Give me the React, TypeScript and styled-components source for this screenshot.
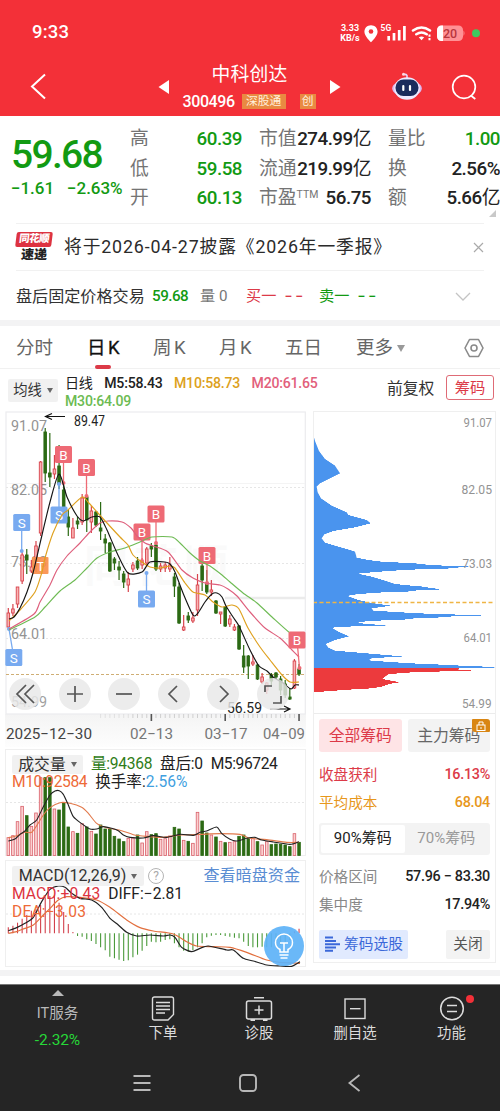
import React from 'react';
import styled, { createGlobalStyle } from 'styled-components';

const Global = createGlobalStyle`
  * { box-sizing: border-box; }
  body { margin: 0; background: #fff; }
  button { border: 0; padding: 0; margin: 0; font: inherit; background: none; }
  svg { display: block; }
`;

const GREEN = '#129a12';
const RED = '#dc3a48';
const FONT = 'Roboto, "Noto Sans CJK SC", sans-serif';

const Page = styled.main`
  width: 500px;
  height: 1111px;
  display: flex;
  flex-direction: column;
  background: #fff;
  color: #222;
  font-family: ${FONT};
  line-height: 1;
  white-space: nowrap;
  overflow: hidden;
`;

/* ---------- header ---------- */
const Header = styled.header`
  height: 116px;
  flex: none;
  background: #f33038;
  color: #fff;
`;
const StatusBar = styled.div`
  height: 58px;
  padding: 7px 20px 0 32px;
  display: flex;
  align-items: center;
  justify-content: space-between;
`;
const Clock = styled.span`
  font-size: 18.5px;
  font-weight: 500;
  letter-spacing: 0.2px;
`;
const StatusIcons = styled.div`
  display: flex;
  align-items: center;
`;
const Speed = styled.div`
  width: 24px;
  font-size: 9px;
  font-weight: 700;
  line-height: 10px;
  text-align: center;
  margin-right: 0;
`;
const TitleBar = styled.div`
  height: 58px;
  display: grid;
  grid-template-columns: 158px 11px 161px 11px 51px 30px 29px 28px;
  align-items: center;
`;
const TitleBlock = styled.div`
  height: 58px;
  display: flex;
  flex-direction: column;
  align-items: center;
`;
const StockName = styled.h1`
  margin: 7px 0 0;
  font-size: 18.8px;
  line-height: 20px;
  font-weight: 400;
  letter-spacing: 0.2px;
`;
const CodeRow = styled.div`
  display: flex;
  align-items: center;
  width: 134px;
  margin-top: 9px;
  height: 15px;
  font-size: 16px;
  font-weight: 500;
  letter-spacing: -0.4px;
`;
const Pill = styled.span<{ $w: number; $ml: number }>`
  width: ${p => p.$w}px;
  margin-left: ${p => p.$ml}px;
  height: 15px;
  background: #e98a42;
  color: #fff0dc;
  font-size: 11.8px;
  font-weight: 400;
  line-height: 14px;
  letter-spacing: 0;
  text-align: center;
`;

/* ---------- quote ---------- */
const Quote = styled.section`
  height: 107px;
  flex: none;
  display: grid;
  grid-template-columns: 102px 112px 112px 112px;
  column-gap: 17px;
  padding: 9px 0 0 11px;
  position: relative;
`;
const PriceBlock = styled.div`
  color: ${GREEN};
  font-weight: 500;
`;
const Price = styled.div`
  margin-top: 11px;
  font-size: 39px;
  line-height: 38px;
  letter-spacing: -1.7px;
`;
const Change = styled.div`
  display: flex;
  margin-top: 6px;
  font-size: 17px;
  gap: 13px;
  letter-spacing: -0.05px;
`;
const QuoteCol = styled.div`
  display: flex;
  flex-direction: column;
`;
const QuoteRow = styled.div`
  height: 29.5px;
  display: flex;
  align-items: center;
  justify-content: space-between;
`;
const QLabel = styled.span`
  color: #747474;
  font-size: 18.8px;
  sup { font-size: 10.5px; position: relative; top: 1px; line-height: 0; }
`;
const QValue = styled.span<{ $green?: boolean }>`
  color: ${p => (p.$green ? GREEN : '#222')};
  font-size: 18.8px;
  font-weight: 500;
  letter-spacing: -0.5px;
`;
const Unit = styled.span`
  font-weight: 400;
`;
const Corner = styled.i`
  position: absolute;
  right: 4px;
  top: 94px;
  border-left: 7px solid transparent;
  border-bottom: 7px solid #c9c9c9;
`;

/* ---------- news and after-hours ---------- */
const News = styled.section`
  height: 48px;
  flex: none;
  margin: 0 16px;
  border-top: 1px solid #f1f1f1;
  border-bottom: 1px solid #f1f1f1;
  display: flex;
  align-items: center;
`;
const Brand = styled.div`
  width: 36px;
  margin-right: 12px;
  text-align: center;
  font-weight: 900;
`;
const BrandTop = styled.div`
  height: 15px;
  background: #dd3341;
  border-radius: 2px;
  transform: skewX(-7deg);
  color: #fff;
  font-size: 10.5px;
  line-height: 14px;
  letter-spacing: -0.6px;
`;
const BrandBottom = styled.div`
  font-size: 13px;
  line-height: 15px;
  transform: skewX(-4deg);
  color: #222;
`;
const NewsText = styled.div`
  font-size: 17.8px;
  letter-spacing: 0.85px;
  flex: 1;
  color: #2b2b2b;
`;
const AfterHours = styled.section`
  height: 49px;
  flex: none;
  display: grid;
  align-items: center;
  padding: 3px 0 0 16px;
  grid-template-columns: 136px 48px 46px 73px 136px 20px;
  font-size: 15.2px;
`;
const AfterTitle = styled.span`
  font-size: 16.1px;
  color: #333;
`;
const Tint = styled.span<{ $c: string; $w?: number; $ls?: number }>`
  color: ${p => p.$c};
  font-weight: ${p => p.$w ?? 400};
  letter-spacing: ${p => p.$ls ?? 0}px;
`;
const Dash = styled.span`
  margin-left: 8px;
  letter-spacing: 3px;
  font-size: 14px;
  font-weight: 500;
`;
const Band = styled.div`
  height: 6px;
  flex: none;
  background: #f3f3f4;
`;

/* ---------- tabs ---------- */
const Tabs = styled.nav`
  height: 43px;
  flex: none;
  padding-left: 16px;
  display: grid;
  grid-template-columns: 71px 66px 66px 66px 71px 108px 40px;
  border-bottom: 1px solid #f1f1f1;
`;
const Tab = styled.button<{ $on?: boolean }>`
  display: flex;
  align-items: center;
  gap: 4px;
  height: 44px;
  font-size: 18.5px;
  word-spacing: -2px;
  color: ${p => (p.$on ? '#111' : '#666')};
  -webkit-text-stroke: ${p => (p.$on ? '0.3px #111' : '0')};
  position: relative;
  &::after {
    content: '';
    display: ${p => (p.$on ? 'block' : 'none')};
    position: absolute;
    left: 8px;
    bottom: 1px;
    width: 16px;
    height: 4px;
    border-radius: 2px;
    background: #dc3a48;
  }
`;
const Caret = styled.i<{ $c?: string; $s?: number }>`
  border: ${p => p.$s ?? 4}px solid transparent;
  border-top: ${p => (p.$s ?? 4) * 1.5}px solid ${p => p.$c ?? '#666'};
  border-bottom: 0;
`;

const MaRow = styled.section`
  height: 42px;
  flex: none;
  display: flex;
  padding: 0 6px 0 8px;
`;
const Picker = styled.button<{ $w: number; $h: number; $size: number }>`
  width: ${p => p.$w}px;
  height: ${p => p.$h}px;
  flex: none;
  display: flex;
  align-items: center;
  justify-content: center;
  gap: 5px;
  background: rgba(238, 238, 238, 0.85);
  border-radius: 2px;
  font-size: ${p => p.$size}px;
  color: #333;
`;
const MaPicker = styled(Picker)`
  margin-top: 10px;
`;
const MaValues = styled.div`
  width: 322px;
  margin-left: 7px;
  padding-top: 5px;
  font-size: 14.1px;
  line-height: 18px;
  font-weight: 500;
  letter-spacing: -0.22px;
`;
const MaItem = styled.span<{ $c: string; $thin?: boolean }>`
  color: ${p => p.$c};
  font-weight: ${p => (p.$thin ? 400 : 500)};
  margin-right: 11.500px;
`;
const Adjust = styled.span`
  font-size: 15.8px;
  line-height: 40px;
  color: #333;
`;
const ChipButton = styled.button`
  width: 48px;
  height: 25px;
  margin: 6px 0 0 auto;
  border: 1px solid #df6b76;
  border-radius: 3px;
  color: ${RED};
  font-size: 15.3px;
  line-height: 22px;
`;

/* ---------- charts ---------- */
const Main = styled.section`
  height: 556px;
  flex: none;
  display: flex;
  padding-left: 5px;
  gap: 7px;
`;
const LeftCol = styled.div`
  width: 301px;
  display: flex;
  flex-direction: column;
`;
const KWrap = styled.div`
  height: 338px;
  position: relative;
`;
const Controls = styled.div`
  position: absolute;
  left: 4px;
  top: 267px;
  display: flex;
  gap: 17.6px;
`;
const RoundButton = styled.button`
  width: 32px;
  height: 32px;
  border-radius: 50%;
  background: rgba(232, 232, 232, 0.82);
  display: grid;
  place-items: center;
`;
const SubChart = styled.div<{ $h: number; $mt: number }>`
  height: ${p => p.$h}px;
  margin-top: ${p => p.$mt}px;
  border: 1px solid #efefef;
  position: relative;
`;
const Plot = styled.svg`
  position: absolute;
  left: -1px;
  top: -1px;
`;
const Legend = styled.div`
  position: relative;
  padding: 5px 0 0 6px;
  font-size: 15.6px;
  color: #222;
`;
const LegendLine = styled.div<{ $h: number }>`
  height: ${p => p.$h}px;
  display: flex;
  align-items: center;
  gap: 8px;
`;
const Help = styled.span`
  width: 16px;
  height: 16px;
  border: 1px solid #b5b5b5;
  border-radius: 50%;
  color: #aaa;
  font-size: 12px;
  line-height: 14px;
  text-align: center;
  margin-left: -4px;
`;
const DarkLink = styled.a`
  margin-left: auto;
  margin-right: 5px;
  color: #5a8dd3;
  font-size: 16.1px;
`;
const Bulb = styled.button`
  position: absolute;
  left: 258px;
  top: 65px;
  width: 40px;
  height: 40px;
  border-radius: 50%;
  background: rgba(93, 178, 247, 0.92);
  display: grid;
  place-items: center;
`;

/* ---------- chip panel ---------- */
const ChipCol = styled.div`
  width: 183px;
  height: 552px;
  border: 1px solid #efefef;
`;
const ChipPanel = styled.div`
  height: 248px;
  border-top: 1px solid #ececec;
  padding: 5px 5px 0 5px;
  display: flex;
  flex-direction: column;
`;
const SplitRow = styled.div<{ $mt?: number }>`
  display: flex;
  justify-content: space-between;
  margin-top: ${p => p.$mt ?? 0}px;
`;
const ScopeButton = styled.button<{ $on?: boolean }>`
  width: 82.5px;
  height: 33px;
  margin-bottom: 9px;
  border-radius: 3px;
  position: relative;
  font-size: 15.8px;
  color: ${p => (p.$on ? RED : '#666')};
  background: ${p => (p.$on ? '#fee4e6' : '#f3f3f3')};
`;
const Lock = styled.span`
  position: absolute;
  right: 0;
  top: 0;
  width: 18px;
  height: 13px;
  background: #d98613;
  border-radius: 1px 3px 1px 3px;
  display: grid;
  place-items: center;
`;
const Stat = styled.div<{ $c: string; $v: string }>`
  height: 28.4px;
  display: flex;
  align-items: center;
  justify-content: space-between;
  font-size: 14.6px;
  color: ${p => p.$c};
  b { font-weight: 500; color: ${p => p.$v}; font-size: 14.4px; letter-spacing: -0.3px; }
`;
const Toggle = styled.div`
  height: 32px;
  margin: 5px 0 8px;
  padding: 2px;
  background: #f3f3f3;
  border-radius: 3px;
  display: flex;
`;
const ToggleItem = styled.button<{ $on?: boolean }>`
  flex: 1;
  border-radius: 2px;
  font-size: 15px;
  letter-spacing: 0;
  color: ${p => (p.$on ? '#222' : '#999')};
  background: ${p => (p.$on ? '#fff' : 'transparent')};
`;
const FootButton = styled.button<{ $w: number; $c: string; $bg: string }>`
  width: ${p => p.$w}px;
  height: 29px;
  border-radius: 2px;
  display: flex;
  align-items: center;
  justify-content: center;
  gap: 4px;
  font-size: 14.7px;
  color: ${p => p.$c};
  background: ${p => p.$bg};
`;

/* ---------- bottom ---------- */
const Divider = styled(Band)`
  margin: 3px 0 8px;
`;
const Bottom = styled.footer`
  height: 127px;
  flex: none;
  background: #252525;
  border-top: 1px solid #777;
  color: #dcdcdc;
`;
const Actions = styled.div`
  height: 70px;
  display: grid;
  grid-template-columns: 115px 96px 96px 96px 97px;
`;
const Action = styled.button`
  display: flex;
  flex-direction: column;
  align-items: center;
  padding-top: 11px;
  color: #dcdcdc;
  font-size: 14.4px;
  line-height: 18px;
  position: relative;
  gap: 4px;
`;
const IndexBox = styled.div`
  display: flex;
  flex-direction: column;
  align-items: center;
  padding-top: 5px;
  font-size: 14.6px;
  line-height: 18px;
  color: #b9b9b9;
`;
const Up = styled.i`
  border: 6px solid transparent;
  border-bottom-color: #b9b9b9;
  border-top: 0;
  margin-bottom: 8px;
`;
const IndexChange = styled.span`
  margin-top: 9px;
  color: #27d838;
  font-size: 15.500px;
  letter-spacing: -0.1px;
`;
const Dot = styled.i`
  position: absolute;
  left: 63px;
  top: 10px;
  width: 8px;
  height: 8px;
  border-radius: 50%;
  background: #f33038;
`;
const SysNav = styled.div`
  height: 56px;
  display: grid;
  grid-template-columns: 133px 106px 109px 20px;
  align-items: center;
`;

/* ---------- data ---------- */
// [isUp, high, bodyTop, bodyBottom, low]
type Candle = [number, number, number, number, number];
const candles: Candle[] = [
  [1, 608, 613, 627, 630], [1, 604, 609, 613, 616], [1, 587, 587, 604, 608], [1, 550, 555, 581, 584],
  [0, 549, 555, 560, 574], [1, 560, 567, 571, 573], [1, 541, 546, 560, 572], [1, 461, 462, 533, 536],
  [0, 428, 432, 473, 482], [0, 433, 473, 477, 487], [1, 455, 469, 474, 479], [0, 445, 466, 484, 489],
  [0, 485, 490, 519, 521], [0, 510, 517, 527, 536], [1, 518, 528, 538, 538], [0, 517, 521, 524, 529],
  [1, 494, 498, 522, 525], [0, 496, 497, 520, 532], [1, 506, 511, 522, 533], [0, 511, 512, 525, 527],
  [0, 502, 528, 531, 540], [0, 534, 539, 543, 553], [0, 542, 543, 571, 572], [0, 557, 559, 563, 570],
  [0, 561, 567, 570, 580], [0, 571, 574, 582, 588], [1, 572, 579, 585, 592], [1, 562, 565, 569, 572],
  [0, 557, 561, 568, 570], [1, 558, 562, 565, 569], [1, 547, 549, 563, 566], [0, 543, 546, 549, 557],
  [0, 542, 545, 569, 571], [1, 563, 566, 569, 572], [1, 562, 565, 568, 572], [1, 557, 565, 569, 572],
  [0, 573, 577, 586, 597], [0, 583, 587, 623, 624], [1, 615, 627, 630, 631], [0, 612, 616, 620, 623],
  [1, 612, 618, 621, 623], [1, 574, 585, 610, 616], [0, 560, 566, 580, 591], [0, 570, 583, 592, 594],
  [1, 580, 590, 592, 596], [0, 600, 601, 613, 614], [1, 612, 612, 614, 624], [0, 606, 607, 626, 627],
  [1, 615, 619, 624, 627], [1, 624, 627, 630, 631], [0, 625, 626, 649, 650], [0, 645, 656, 667, 673],
  [0, 655, 656, 666, 679], [1, 655, 662, 664, 666], [0, 664, 665, 679, 680], [1, 673, 677, 682, 684],
  [1, 682, 683, 690, 694], [0, 673, 675, 681, 685], [0, 672, 673, 677, 679], [0, 676, 679, 690, 695],
  [0, 680, 684, 695, 698], [0, 688, 697, 699, 700], [1, 659, 661, 688, 689], [0, 664, 669, 674, 676],
];
const px = (i: number) => 8.3 + i * 4.615;

const volumes = [
  278, 272, 230, 184, 212, 244, 204, 98, 98, 98, 192, 195, 173, 246, 260, 265, 236, 246, 259, 267, 240, 252,
  253, 274, 282, 290, 280, 279, 270, 294, 260, 269, 266, 283, 281, 273, 247, 252, 286, 289, 295, 202, 228,
  264, 270, 276, 289, 293, 292, 290, 274, 270, 281, 280, 290, 300, 290, 299, 297, 298, 300, 305, 266, 292,
];
const macd = [
  202, 197, 188, 176, 165, 152, 148, 135, 112, 108, 105, 128, 156, 192, 216, 228, 230, 238, 243, 252, 262, 271,
  290, 295, 299, 303, 301, 292, 284, 272, 258, 245, 247, 245, 240, 238, 250, 262, 272, 275, 270, 262, 250,
  232, 227, 225, 225, 228, 230, 233, 235, 245, 258, 262, 262, 260, 262, 262, 258, 255, 250, 240, 214, 206,
];

type Pt = [number, number];
const smooth = (p: Pt[]) => {
  let d = `M${p[0][0]} ${p[0][1]}`;
  for (let i = 0; i < p.length - 1; i++) {
    const a = p[Math.max(0, i - 1)], b = p[i], c = p[i + 1], e = p[Math.min(p.length - 1, i + 2)];
    d += `C${b[0] + (c[0] - a[0]) / 8} ${b[1] + (c[1] - a[1]) / 8} ${c[0] - (e[0] - b[0]) / 8} ${c[1] - (e[1] - b[1]) / 8} ${c[0]} ${c[1]}`;
  }
  return d;
};
const third = (oy: number, p: Pt[]): Pt[] => p.map(([x, y]) => [x / 3, oy + y / 3]);

const m5: Pt[] = [[9, 619], [14, 617], [20, 608], [27, 592], [33, 573], [42, 535], [50, 502], [59, 474], [67, 497], [77, 516], [83, 521], [88, 519], [92, 517], [100, 517], [107, 530], [117, 553], [128, 573], [142, 572], [150, 562], [165, 562], [170, 564], [175, 572], [183, 593], [193, 615], [198, 613], [205, 602], [212, 594], [217, 593], [222, 597], [226, 606], [233, 617], [239, 626], [250, 650], [259, 666], [267, 671], [273, 677], [283, 683], [291, 689], [295, 685], [299, 685]];
const m10: Pt[] = [[9, 621], [20, 610], [35, 592], [42, 572], [45, 558], [53, 533], [62, 515], [68, 510], [82, 497], [88, 502], [97, 512], [107, 523], [120, 537], [128, 545], [133, 555], [142, 562], [150, 567], [160, 568], [170, 566], [175, 568], [185, 583], [193, 592], [205, 595], [213, 602], [222, 607], [232, 605], [239, 609], [248, 628], [260, 647], [270, 660], [282, 675], [290, 682], [299, 682]];
const m20: Pt[] = [[9, 629], [34, 614], [40, 602], [50, 585], [57, 570], [67, 556], [80, 543], [90, 532], [100, 523], [108, 521], [122, 522], [131, 528], [137, 536], [145, 543], [153, 546], [168, 552], [182, 570], [193, 578], [205, 583], [220, 585], [228, 589], [237, 596], [250, 612], [265, 628], [280, 638], [292, 650], [299, 657]];
const m30: Pt[] = [[9, 630], [35, 617], [45, 607], [60, 591], [75, 580], [87, 568], [97, 558], [110, 552], [125, 548], [140, 542], [152, 537], [172, 537], [180, 543], [190, 553], [200, 561], [210, 566], [222, 575], [230, 582], [243, 593], [257, 603], [273, 618], [290, 633], [297, 635]];

const volM5 = third(745, [[25, 288], [45, 282], [60, 268], [75, 258], [90, 240], [110, 225], [130, 185], [150, 150], [165, 138], [178, 137], [190, 148], [205, 180], [220, 215], [245, 236], [270, 252], [290, 252], [310, 245], [335, 250], [355, 257], [370, 270], [390, 277], [430, 279], [460, 272], [500, 277], [540, 268], [580, 271], [600, 262], [620, 258], [650, 246], [665, 265], [690, 283], [710, 288], [740, 280], [765, 277], [785, 285], [820, 291], [870, 298], [897, 290]]);
const volM10 = third(745, [[25, 278], [50, 272], [75, 262], [95, 262], [110, 242], [130, 210], [150, 188], [180, 173], [210, 175], [245, 187], [265, 205], [290, 235], [320, 248], [365, 257], [400, 269], [440, 274], [490, 277], [540, 270], [600, 268], [660, 266], [720, 268], [750, 280], [800, 284], [860, 292], [897, 292]]);
const diff = third(860, [[25, 212], [50, 203], [75, 190], [100, 172], [125, 125], [150, 88], [175, 78], [195, 82], [215, 100], [240, 115], [275, 120], [305, 142], [330, 175], [355, 195], [380, 217], [410, 228], [450, 225], [490, 228], [510, 225], [525, 232], [545, 262], [575, 275], [600, 265], [625, 258], [680, 270], [700, 270], [730, 295], [760, 303], [800, 315], [840, 318], [875, 319], [900, 305]]);
const dea = third(860, [[25, 220], [50, 215], [75, 205], [100, 195], [130, 165], [150, 145], [175, 120], [200, 110], [240, 112], [290, 120], [330, 142], [380, 180], [420, 203], [460, 213], [520, 222], [560, 245], [590, 258], [640, 260], [690, 262], [740, 277], [800, 300], [840, 307], [900, 310]]);

const chipBlue: Pt[] = [[24, 88], [30, 108], [42, 138], [60, 162], [90, 182], [105, 205], [85, 215], [45, 235], [35, 245], [38, 262], [48, 280], [80, 302], [125, 322], [130, 330], [185, 345], [197, 355], [150, 367], [85, 378], [58, 388], [50, 400], [60, 413], [100, 425], [135, 435], [150, 440], [155, 458], [190, 465], [230, 470], [330, 475], [375, 480], [490, 485], [430, 490], [330, 493], [250, 498], [200, 502], [158, 506], [200, 515], [240, 527], [270, 537], [350, 545], [402, 552], [310, 558], [200, 564], [135, 570], [130, 574], [160, 585], [200, 594], [258, 602], [200, 610], [205, 617], [340, 625], [528, 631], [400, 636], [300, 642], [220, 647], [155, 651], [180, 657], [258, 661], [120, 665], [80, 668], [100, 680], [132, 694], [90, 705], [62, 717], [70, 728], [90, 737], [150, 742], [220, 748], [290, 754], [200, 760], [190, 766], [280, 773], [400, 779], [568, 786], [470, 789], [24, 789]];
const chipRed: Pt[] = [[24, 789], [462, 789], [460, 795], [498, 797], [385, 800], [300, 803], [250, 808], [240, 815], [232, 822], [280, 831], [250, 838], [230, 845], [200, 850], [130, 854], [50, 860], [24, 862]];

// The distribution is drawn as one bar per pixel row, as wide as the outline at that height.
const chipBars = (p: Pt[]) => {
  const pts = p.map(([x, y]): Pt => [305 + x / 3, 405 + y / 3]).sort((a, b) => a[1] - b[1]);
  let d = '';
  for (let y = Math.ceil(pts[0][1]); y < pts[pts.length - 1][1]; y++) {
    const mid = y + 0.5;
    let k = pts.findIndex(q => q[1] > mid);
    if (k < 1) k = pts.length - 1;
    const [a, b] = [pts[k - 1], pts[k]];
    const t = b[1] === a[1] ? 0 : (mid - a[1]) / (b[1] - a[1]);
    let x = a[0] + (b[0] - a[0]) * Math.min(1, t);
    pts.forEach(q => { if (q[1] >= y && q[1] < y + 1 && q[0] > x && q[0] > 395) x = q[0]; });
    d += `M313 ${mid}H${x.toFixed(1)}`;
  }
  return d;
};

const AxisText = ({ x, y, w, size, children, fill = '#939393' }: { x: number; y: number; w: number; size: number; children: string; fill?: string }) => (
  <text x={x} y={y} fontSize={size} fill={fill} textLength={w} lengthAdjust="spacingAndGlyphs" fontFamily="Roboto">{children}</text>
);

const Flag = ({ x, y, kind, tx, ty }: { x: number; y: number; kind: 'B' | 'S'; tx: number; ty: number }) => {
  const c = kind === 'B' ? '#ee6a75' : '#78aaf0';
  return (
    <g>
      <line x1={x} y1={y} x2={tx} y2={ty} stroke={c} strokeWidth="1.3" />
      <circle cx={tx} cy={ty} r="2" fill={c} />
      <rect x={x - 8.5} y={y - 8.5} width="17" height="17" rx="1.5" fill={c} />
      <text x={x} y={y + 5} fontSize="13.5" fill="#fff" textAnchor="middle" fontFamily="Roboto">{kind}</text>
    </g>
  );
};

const KChart = () => (
  <svg width="301" height="338" viewBox="5 411 301 338">
    <defs>
      <linearGradient id="ruler" x1="0" x2="0" y1="0" y2="1">
        <stop offset="0" stopColor="#f4f4f4" />
        <stop offset="1" stopColor="#fdfdfd" />
      </linearGradient>
    </defs>
    <rect x="5" y="714" width="301" height="33" fill="url(#ruler)" />
    <rect x="6" y="412" width="299.3" height="302" fill="#fff" stroke="#ececee" strokeWidth="1.2" />
    <text x="84" y="582" fontSize="44" fontWeight="700" fill="#fafafa" textLength="144" fontFamily="Noto Sans CJK SC">同花顺</text>
    <path d="M225 598H305" stroke="#ebebeb" strokeWidth="2.4" />
    <path d="M6 483.500H305" stroke="#f4f4f4" />
    <path d="M6 487.500H305M6 563.500H305M6 638.500H305" stroke="#e6e6e6" strokeDasharray="2 2" />
    <path d="M6 674.5H305" stroke="#cfae74" strokeDasharray="3 2" />
    <AxisText x={11} y={431} w={36} size={15.5}>91.07</AxisText>
    <AxisText x={11} y={495} w={36} size={15.5}>82.05</AxisText>
    <AxisText x={11} y={567} w={36} size={15.5}>73.03</AxisText>
    <AxisText x={11} y={639} w={36} size={15.5}>64.01</AxisText>
    <AxisText x={11} y={707} w={36} size={15.5} fill="#a0a0a0">54.99</AxisText>
    {candles.map(([up, h, t, b, l], i) => {
      const c = up ? '#d8434c' : '#2c6a14';
      return (
        <g key={i}>
          <path d={`M${px(i)} ${h}V${t}M${px(i)} ${b}V${l}`} stroke={c} strokeWidth="1.2" />
          <rect x={px(i) - 1.3} y={t} width="2.6" height={b - t} fill={up ? '#f9b4b4' : c} stroke={c} strokeWidth="0.9" />
        </g>
      );
    })}
    <Flag kind="S" x={21.7} y={522.5} tx={21.7} ty={551} />
    <Flag kind="S" x={59} y={515} tx={59} ty={484} />
    <Flag kind="S" x={146.5} y={599} tx={146.5} ty={573} />
    <Flag kind="S" x={13.8} y={657.5} tx={9} ty={629} />
    <rect x="32" y="557" width="16.5" height="17" rx="1" fill="#f98d48" fillOpacity="0.9" />
    <text x="40.5" y="571" fontSize="13.5" fill="#fff" textAnchor="middle" fontFamily="Roboto">T</text>
    <Flag kind="B" x={63.5} y={454.5} tx={63.5} ty={483} />
    <Flag kind="B" x={86.5} y={467.5} tx={86.5} ty={496} />
    <Flag kind="B" x={142} y={532} tx={142} ty={561} />
    <Flag kind="B" x={156} y={514} tx={156} ty={543} />
    <Flag kind="B" x={207} y={555.5} tx={207} ty={583} />
    <g fill="none" strokeWidth="1.15">
      <path d={smooth(m30)} stroke="#6fbb55" />
      <path d={smooth(m20)} stroke="#de5f7c" />
      <path d={smooth(m10)} stroke="#dfa11f" />
      <path d={smooth(m5)} stroke="#151515" />
    </g>
    <Flag kind="B" x={297} y={640} tx={299.5} ty={668} />
    <g stroke="#111" strokeWidth="1.2" fill="none">
      <path d="M65 416.5H45.5M52 413.5L45.5 416.5L52 419.5" />
      <path d="M270 709H290M284 706L290 709L284 712" />
    </g>
    <AxisText x={74} y={425.5} w={31} size={13.8} fill="#222">89.47</AxisText>
    <AxisText x={227} y={712.5} w={35} size={14} fill="#222">56.59</AxisText>
    {Array.from({ length: 44 }, (_, i) => 63 - i).map(i => {
      const major = i === 63 || i === 47 || i === 31;
      return <path key={i} d={`M${px(i)} 714V${major ? 721 : 718}`} stroke={major ? '#555' : '#cfcfcf'} strokeWidth={major ? 1.6 : 1} opacity={i < 27 ? 0.5 : 1} />;
    })}
    <AxisText x={6} y={738.5} w={86} size={15} fill="#444">2025−12−30</AxisText>
    <AxisText x={130} y={738.5} w={43} size={15} fill="#777">02−13</AxisText>
    <AxisText x={204.5} y={738.5} w={43} size={15} fill="#777">03−17</AxisText>
    <AxisText x={263} y={738.5} w={42} size={15} fill="#777">04−09</AxisText>
  </svg>
);

const controlPaths = ['M15 2L6 11L15 20M23 2L14 11L23 20', 'M11 3V19M3 11H19', 'M3 11H19', 'M14 3L6 11L14 19', 'M8 3L16 11L8 19', 'M3 9V3H10M19 13V20H11'];

const App = () => (
  <Page>
    <Global />
    <Header>
      <StatusBar>
        <Clock>9:33</Clock>
        <StatusIcons>
          <Speed>3.33<br />KB/s</Speed>
          <svg width="118" height="20" viewBox="362 22 118 20">
            <path d="M371 24.300c-3.800 0-6.600 2.800-6.600 6.500 0 4.600 6.600 10.400 6.600 10.400s6.600-5.800 6.600-10.400c0-3.700-2.800-6.500-6.600-6.500z" fill="#fff" />
            <circle cx="371" cy="30.500" r="2.300" fill="#f33038" />
            <text x="380.500" y="30" fontSize="8.500" fontWeight="700" fill="#fff" fontFamily="Roboto">5G</text>
            <path d="M388.700 35V39.500M394 32V39.500M399.200 29V39.500M404.400 25V39.500" stroke="#fff" strokeWidth="2.700" />
            <path d="M413 29.500q8.500-6 17 0M416.300 33.300q5.200-3.600 10.400 0" fill="none" stroke="#fff" strokeWidth="2.500" strokeLinecap="round" />
            <path d="M418.800 36.300q2.700-1.800 5.400 0l-2.700 3z" fill="#fff" />
            <path d="M429.500 33.500v2.200M429.500 37v2.300" stroke="#fff" strokeWidth="2" />
            <rect x="437" y="24.500" width="26" height="15.500" rx="4.500" fill="#ff9195" />
            <path d="M463.500 29.500q2 2.700 0 5.500z" fill="#ff9195" />
            <path d="M441.500 24.500H443V40H441.500a4.500 4.500 0 0 1-4.500-4.500V29a4.500 4.500 0 0 1 4.500-4.500z" fill="#fff" />
            <text x="443" y="36.700" fontSize="12.500" fontWeight="500" fill="#b9373d" fontFamily="Roboto">20</text>
            <circle cx="476" cy="32.300" r="4" fill="#3ecb5f" />
          </svg>
        </StatusIcons>
      </StatusBar>
      <TitleBar>
        <svg width="60" height="30" viewBox="0 72 60 30"><path d="M45 74.500L32 86.500L45 98.500" fill="none" stroke="#fff" strokeWidth="2" /></svg>
        <svg width="11" height="14" viewBox="0 0 11 14"><path d="M11 0V14L.5 7z" fill="#fff" /></svg>
        <TitleBlock>
          <StockName>中科创达</StockName>
          <CodeRow>300496<Pill $w={44} $ml={7}>深股通</Pill><Pill $w={16} $ml={14}>创</Pill></CodeRow>
        </TitleBlock>
        <svg width="11" height="14" viewBox="0 0 11 14"><path d="M0 0V14L10.500 7z" fill="#fff" /></svg>
        <span />
        <svg width="30" height="30" viewBox="392 72 30 30">
          <path d="M407 78v-2.500q-1-1.500-3-1" fill="none" stroke="#e5d8ff" strokeWidth="1.500" />
          <circle cx="403.500" cy="74.300" r="1.500" fill="#ffd8e0" />
          <ellipse cx="407" cy="88.500" rx="14.800" ry="8" fill="#ddb9ee" />
          <ellipse cx="407" cy="88.500" rx="12.800" ry="11.300" fill="#efeaff" />
          <rect x="395.500" y="79.500" width="23" height="16.500" rx="8" fill="#1b2b5c" />
          <path d="M403.300 86v4M410 86v4" stroke="#fff" strokeWidth="2.200" strokeLinecap="round" />
        </svg>
        <span />
        <svg width="28" height="30" viewBox="450.700 72 28 30"><circle cx="463.700" cy="87" r="11.300" fill="none" stroke="#fff" strokeWidth="1.700" /><path d="M470.500 95.500L475 99" stroke="#fff" strokeWidth="1.700" /></svg>
      </TitleBar>
    </Header>

    <Quote>
      <PriceBlock>
        <Price>59.68</Price>
        <Change><span>−1.61</span><span>−2.63%</span></Change>
      </PriceBlock>
      <QuoteCol>
        <QuoteRow><QLabel>高</QLabel><QValue $green>60.39</QValue></QuoteRow>
        <QuoteRow><QLabel>低</QLabel><QValue $green>59.58</QValue></QuoteRow>
        <QuoteRow><QLabel>开</QLabel><QValue $green>60.13</QValue></QuoteRow>
      </QuoteCol>
      <QuoteCol>
        <QuoteRow><QLabel>市值</QLabel><QValue>274.99<Unit>亿</Unit></QValue></QuoteRow>
        <QuoteRow><QLabel>流通</QLabel><QValue>219.99<Unit>亿</Unit></QValue></QuoteRow>
        <QuoteRow><QLabel>市盈<sup>TTM</sup></QLabel><QValue>56.75</QValue></QuoteRow>
      </QuoteCol>
      <QuoteCol>
        <QuoteRow><QLabel>量比</QLabel><QValue $green>1.00</QValue></QuoteRow>
        <QuoteRow><QLabel>换</QLabel><QValue>2.56%</QValue></QuoteRow>
        <QuoteRow><QLabel>额</QLabel><QValue>5.66<Unit>亿</Unit></QValue></QuoteRow>
      </QuoteCol>
      <Corner />
    </Quote>

    <News>
      <Brand>
        <BrandTop>同花顺</BrandTop>
        <BrandBottom>速递</BrandBottom>
      </Brand>
      <NewsText>将于2026-04-27披露《2026年一季报》</NewsText>
      <svg width="11" height="11" viewBox="0 0 11 11"><path d="M1 1L10 10M10 1L1 10" stroke="#aaa" strokeWidth="1.200" /></svg>
    </News>
    <AfterHours>
      <AfterTitle>盘后固定价格交易</AfterTitle>
      <Tint $c={GREEN} $w={500} $ls={-0.5}>59.68</Tint>
      <Tint $c="#777">量 0</Tint>
      <Tint $c={RED}>买一<Dash>−−</Dash></Tint>
      <Tint $c={GREEN}>卖一<Dash>−−</Dash></Tint>
      <svg width="16" height="10" viewBox="0 0 16 10"><path d="M1 1L8 8L15 1" fill="none" stroke="#c4c4c4" strokeWidth="1.300" /></svg>
    </AfterHours>
    <Band />

    <Tabs>
      <Tab>分时</Tab>
      <Tab $on>日 K</Tab>
      <Tab>周 K</Tab>
      <Tab>月 K</Tab>
      <Tab>五日</Tab>
      <Tab>更多<Caret $c="#999" $s={4.7} /></Tab>
      <Tab>
        <svg width="20" height="20" viewBox="0 0 20 20" fill="none" stroke="#8a8a8a" strokeWidth="1.600"><path d="M5.500 1.500H14.500L19 10L14.500 18.500H5.500L1 10z" strokeLinejoin="round" /><circle cx="10" cy="10" r="3" /></svg>
      </Tab>
    </Tabs>

    <MaRow>
      <MaPicker $w={50} $h={23} $size={14.3}>均线<Caret $s={3.8} /></MaPicker>
      <MaValues>
        <MaItem $c="#222" $thin>日线</MaItem><MaItem $c="#222">M5:58.43</MaItem><MaItem $c="#dda11c">M10:58.73</MaItem><MaItem $c="#e2607b">M20:61.65</MaItem><br />
        <MaItem $c="#6cbb52">M30:64.09</MaItem>
      </MaValues>
      <Adjust>前复权</Adjust>
      <ChipButton>筹码</ChipButton>
    </MaRow>

    <Main>
      <LeftCol>
        <KWrap>
          <KChart />
          <Controls>
            {controlPaths.map((d, i) => (
              <RoundButton key={i}>
                <svg width="22" height="22" viewBox={i === 0 ? '3 0 22 22' : '0 0 22 22'}><path d={d} fill="none" stroke="#555" strokeWidth="1.700" /></svg>
              </RoundButton>
            ))}
          </Controls>
        </KWrap>

        <SubChart $h={107} $mt={0}>
          <Plot width="301" height="107" viewBox="5 749 301 107">
            <path d="M6 802.500H305" stroke="#e6e6e6" strokeDasharray="2 2" />
            {volumes.map((v, i) => {
              const y = 745 + v / 3;
              const up = candles[i][0];
              return <rect key={i} x={px(i) - 1.3} y={y} width="2.600" height={855.5 - y} fill={up ? '#fbd0d0' : '#2c6a14'} stroke={up ? '#d9606a' : '#2c6a14'} strokeWidth="0.800" />;
            })}
            <path d={smooth(volM10)} fill="none" stroke="#e27a4c" strokeWidth="1.100" />
            <path d={smooth(volM5)} fill="none" stroke="#222" strokeWidth="1.100" />
          </Plot>
          <Legend>
            <LegendLine $h={19}>
              <Picker $w={71} $h={19} $size={15.8}>成交量<Caret $s={3.8} /></Picker>
              <Tint $c="#2f7d18" $ls={-0.3}>量:94368</Tint>
              <Tint $c="#222" $ls={-0.3}>盘后:0</Tint>
              <Tint $c="#222" $ls={-0.4}>M5:96724</Tint>
            </LegendLine>
            <LegendLine $h={17}>
              <Tint $c="#ee6a38" $ls={-0.4}>M10:92584</Tint>
              <span>换手率:<Tint $c="#3f9fe0">2.56%</Tint></span>
            </LegendLine>
          </Legend>
        </SubChart>

        <SubChart $h={107} $mt={4}>
          <Plot width="301" height="107" viewBox="5 860 301 107">
            <path d="M6 914H305" stroke="#e6e6e6" strokeDasharray="2 2" />
            {macd.map((v, i) => (
              <path key={i} d={`M${px(i)} 933.300V${860 + v / 3}`} stroke={v < 220 ? '#d3414c' : '#4a9a3a'} strokeWidth="1.100" />
            ))}
            <path d={smooth(dea)} fill="none" stroke="#e2703f" strokeWidth="1.200" />
            <path d={smooth(diff)} fill="none" stroke="#222" strokeWidth="1.200" />
          </Plot>
          <Legend>
            <LegendLine $h={20}>
              <Picker $w={132} $h={20} $size={16}>MACD(12,26,9)<Caret $s={3.8} /></Picker>
              <Help>?</Help>
              <DarkLink>查看暗盘资金</DarkLink>
            </LegendLine>
            <LegendLine $h={18}>
              <Tint $c="#dd3340" $ls={0.1}>MACD:+0.43</Tint>
              <Tint $c="#222">DIFF:−2.81</Tint>
            </LegendLine>
            <LegendLine $h={17}>
              <Tint $c="#ee6a38" $ls={0.2}>DEA:−3.03</Tint>
            </LegendLine>
          </Legend>
          <Bulb>
            <svg width="22" height="28" viewBox="0 0 22 28" fill="none" stroke="#fff" strokeWidth="1.500"><path d="M7 20V17.500C4 16 2.500 13.500 2.500 10.500a8.500 8.500 0 0 1 17 0c0 3-1.500 5.500-4.500 7V20zM6.500 23H15.500M7.500 26H14.500M7 11H15M11 11V20" /></svg>
          </Bulb>
        </SubChart>
      </LeftCol>

      <ChipCol>
        <svg width="181" height="301" viewBox="314 412 181 301">
          <path d={chipBars(chipBlue)} stroke="#4a94ee" strokeWidth="1.050" />
          <path d={chipBars(chipRed)} stroke="#ec3a3d" strokeWidth="1.050" />
          <path d="M313 602.500H495" stroke="#efb545" strokeWidth="1.300" strokeDasharray="4 2.500" />
          <AxisText x={463.5} y={427.2} w={28.5} size={13}>91.07</AxisText>
          <AxisText x={461.5} y={493.5} w={30.5} size={13}>82.05</AxisText>
          <AxisText x={462.5} y={567.5} w={29.5} size={13}>73.03</AxisText>
          <AxisText x={463.5} y={641.5} w={28.5} size={13}>64.01</AxisText>
          <AxisText x={462} y={708} w={29.5} size={13}>54.99</AxisText>
        </svg>
        <ChipPanel>
          <SplitRow>
            <ScopeButton $on>全部筹码</ScopeButton>
            <ScopeButton>主力筹码
              <Lock><svg width="10" height="10" viewBox="0 0 10 10" fill="none" stroke="#fff"><rect x="1" y="4" width="8" height="5.500" /><path d="M3 4V1H7V4M5 6V8" /></svg></Lock>
            </ScopeButton>
          </SplitRow>
          <Stat $c={RED} $v={RED}>收盘获利<b>16.13%</b></Stat>
          <Stat $c="#e7971c" $v="#e7971c">平均成本<b>68.04</b></Stat>
          <Toggle>
            <ToggleItem $on>90%筹码</ToggleItem>
            <ToggleItem>70%筹码</ToggleItem>
          </Toggle>
          <Stat $c="#888" $v="#222">价格区间<b>57.96 − 83.30</b></Stat>
          <Stat $c="#888" $v="#222">集中度<b>17.94%</b></Stat>
          <SplitRow $mt={10}>
            <FootButton $w={89} $c="#3b68d9" $bg="#e1eafe">
              <svg width="16" height="16" viewBox="0 0 16 16" stroke="#3b68d9" strokeWidth="2"><path d="M1 1.500H9M1 5H12M1 8.300H16M1 11.600H12M1 14.800H9" /></svg>
              筹码选股
            </FootButton>
            <FootButton $w={44} $c="#555" $bg="#f3f3f3">关闭</FootButton>
          </SplitRow>
        </ChipPanel>
      </ChipCol>
    </Main>
    <Divider />

    <Bottom>
      <Actions>
        <IndexBox><Up />IT服务<IndexChange>-2.32%</IndexChange></IndexBox>
        <Action>
          <svg width="24" height="25" viewBox="0 0 24 25" fill="none" stroke="#dcdcdc" strokeWidth="1.400"><path d="M3.500 1H20.500Q22.500 1 22.500 3V18.500L17 24H3.500Q1.500 24 1.500 22V3Q1.500 1 3.500 1zM5 6.500H19M5 10H19M5 13.500H19M5 17H14" /></svg>
          下单
        </Action>
        <Action>
          <svg width="28" height="25" viewBox="0 0 28 25" fill="none" stroke="#dcdcdc" strokeWidth="1.500"><rect x="1.500" y="5" width="25" height="18" rx="2" /><path d="M9 1.800H19M14 9.500V18.500M9.500 14H18.500" /><path d="M5.500 24H10M18 24H22.500" strokeWidth="2" /></svg>
          诊股
        </Action>
        <Action>
          <svg width="24" height="25" viewBox="0 0 24 25" fill="none" stroke="#dcdcdc" strokeWidth="1.400"><rect x="2" y="3" width="20" height="19.500" /><path d="M7 12.700H17.500" /></svg>
          删自选
        </Action>
        <Action>
          <svg width="26" height="25" viewBox="0 0 26 25" fill="none" stroke="#dcdcdc" strokeWidth="1.500"><circle cx="13" cy="12.500" r="11.300" /><path d="M8 9.500H18M8 15.500H18" /></svg>
          功能
          <Dot />
        </Action>
      </Actions>
      <SysNav>
        <span />
        <svg width="18" height="18" viewBox="0 0 18 18"><path d="M.5 2H17.500M.5 9H17.500M.5 16H17.500" stroke="#b8b8b8" strokeWidth="1.900" /></svg>
        <svg width="18" height="18" viewBox="0 0 18 18"><rect x="1" y="1" width="16" height="16" rx="3.500" fill="none" stroke="#b8b8b8" strokeWidth="1.900" /></svg>
        <svg width="12" height="18" viewBox="0 0 12 18"><path d="M11.500 1L1.500 9L11.500 17" fill="none" stroke="#b8b8b8" strokeWidth="1.900" /></svg>
      </SysNav>
    </Bottom>
  </Page>
);

export default App;
